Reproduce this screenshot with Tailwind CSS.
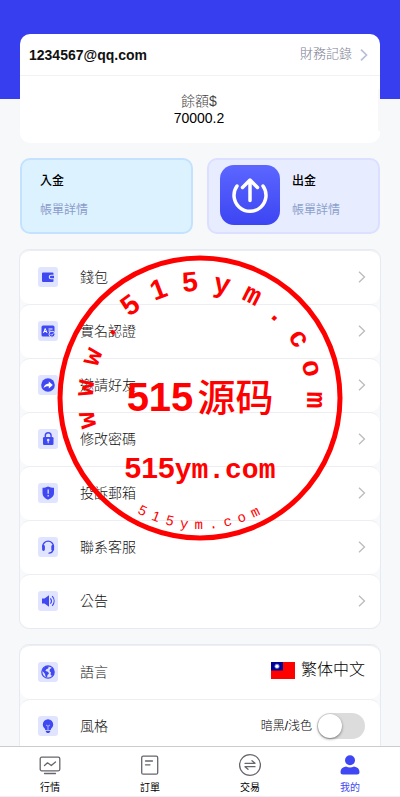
<!DOCTYPE html>
<html lang="zh-Hant">
<head>
  <meta charset="UTF-8">
  <meta name="viewport" content="width=device-width, initial-scale=1.0">
  <title>我的</title>
  <script src="https://cdn.jsdelivr.net/npm/@tailwindcss/browser@4"></script>
</head>
<body class="relative flex h-screen flex-col overflow-hidden bg-[#f6f8fa] font-['Liberation_Sans','Noto_Sans_CJK_TC',sans-serif] text-sm text-black">
  <main class="min-h-0 flex-1 overflow-y-auto [scrollbar-width:none]">
    <div class="h-[99px] bg-[#373ef0]"></div>

    <div class="-mt-[65px] px-5">
      <!-- Account -->
      <section class="rounded-[10px] bg-white">
        <div class="flex h-[42px] items-center justify-between border-b border-[#f2f2f4] pr-3 pl-[9px]">
          <h1 class="font-bold text-[#111]">1234567@qq.com</h1>
          <a href="#" class="flex items-center gap-2 text-[13px] font-light text-[#7c7e92]">
            財務記錄
            <svg class="h-3 w-2" viewBox="0 0 8 12" fill="none" stroke="#b9bfda" stroke-width="1.700"><path d="M1 .7 6.500 6 1 11.300"/></svg>
          </a>
        </div>
        <div class="pt-[13px] pb-3">
          <div class="border-r-2 border-[#f7f7f8] py-1 text-center leading-[17px]">
            <p class="font-light text-[#444]">餘額$</p>
            <p>70000.2</p>
          </div>
        </div>
      </section>

      <!-- Deposit / withdraw -->
      <section class="mt-[15px] grid grid-cols-2 gap-[14px] text-xs">
        <a href="#" class="flex h-[76px] flex-col justify-center gap-[13px] rounded-[10px] border-2 border-[#c4e2ff] bg-[#dcf3ff] pb-[2px] pl-[18px]">
          <span class="font-medium">入金</span>
          <span class="text-[#8c9bcb]">帳單詳情</span>
        </a>
        <a href="#" class="flex h-[76px] items-center gap-3 rounded-[10px] border-2 border-[#dcdfff] bg-[#e7ecff] pb-[2px] pl-[11px]">
          <svg class="h-[60px] w-[60px] shrink-0" viewBox="0 0 60 60" fill="none" stroke="#fff" stroke-width="3.500" stroke-linecap="round" stroke-linejoin="round">
            <defs>
              <linearGradient id="withdraw" x1="0" y1="0" x2="0" y2="1">
                <stop offset="0" stop-color="#5c66ff"/>
                <stop offset="1" stop-color="#3c45f2"/>
              </linearGradient>
            </defs>
            <rect width="60" height="60" rx="14" fill="url(#withdraw)" stroke="none"/>
            <path d="M17 21A16 16 0 1 0 43 21M30 35.500V15.500M22.500 22.500 30 15l7.500 7.500"/>
          </svg>
          <span class="flex flex-col gap-[13px]">
            <span class="font-medium">出金</span>
            <span class="text-[#8ba1cb]">帳單詳情</span>
          </span>
        </a>
      </section>

      <!-- Menu -->
      <nav class="-mx-px mt-[15px] rounded-[10px] border border-[#e7eaf2] bg-[#f8f9fb] font-light text-[#111]">
        <a href="#" class="flex h-[54px] items-center gap-[22px] rounded-[10px] border-t border-[#eceef2] bg-white pr-[14px] pb-px pl-[18px]">
          <svg class="h-5 w-5 rounded-[3px] bg-[#e0e4ff]" viewBox="0 0 20 20" fill="#4048f2">
            <path d="M5 5.500h9.500a1 1 0 0 1 1 1v1.200H13a2.300 2.300 0 0 0 0 4.600h2.500V14a1 1 0 0 1-1 1H5a1 1 0 0 1-1-1V6.500a1 1 0 0 1 1-1z"/>
            <path d="M13.200 8.700h2.800v2.600h-2.800a1.300 1.300 0 0 1 0-2.600z"/>
          </svg>
          <span class="flex-1">錢包</span>
          <svg class="h-3 w-2" viewBox="0 0 8 12" fill="none" stroke="#bbb" stroke-width="1.300"><path d="M1 .7 6.500 6 1 11.300"/></svg>
        </a>
        <a href="#" class="flex h-[54px] items-center gap-[22px] rounded-[10px] border-t border-[#eceef2] bg-white pr-[14px] pb-px pl-[18px]">
          <svg class="h-5 w-5 rounded-[3px] bg-[#e0e4ff]" viewBox="0 0 20 20" fill="none" stroke="#fff">
            <rect x="3.500" y="4.500" width="13" height="11" rx="1.500" fill="#4048f2" stroke="none"/>
            <path d="m5.500 12 1.700-4.500L9 12M6 10.500h2.500M10.500 8h4M10.500 10h2"/>
            <circle cx="14" cy="13.200" r="3" fill="#4048f2" stroke="#e0e4ff"/>
            <path d="m12.700 13.200 1 1 1.600-1.800" stroke-width=".8"/>
          </svg>
          <span class="flex-1">實名認證</span>
          <svg class="h-3 w-2" viewBox="0 0 8 12" fill="none" stroke="#bbb" stroke-width="1.300"><path d="M1 .7 6.500 6 1 11.300"/></svg>
        </a>
        <a href="#" class="flex h-[54px] items-center gap-[22px] rounded-[10px] border-t border-[#eceef2] bg-white pr-[14px] pb-px pl-[18px]">
          <svg class="h-5 w-5 rounded-[3px] bg-[#e0e4ff]" viewBox="0 0 20 20">
            <circle cx="10" cy="10" r="6.800" fill="#4048f2"/>
            <path d="M10.800 6.500 14.800 10l-4 3.400v-2.200c-2.400-.1-4 .5-5.200 2 .2-2.700 2-4.600 5.200-4.800z" fill="#fff"/>
          </svg>
          <span class="flex-1">邀請好友</span>
          <svg class="h-3 w-2" viewBox="0 0 8 12" fill="none" stroke="#bbb" stroke-width="1.300"><path d="M1 .7 6.500 6 1 11.300"/></svg>
        </a>
        <a href="#" class="flex h-[54px] items-center gap-[22px] rounded-[10px] border-t border-[#eceef2] bg-white pr-[14px] pb-px pl-[18px]">
          <svg class="h-5 w-5 rounded-[3px] bg-[#e0e4ff]" viewBox="0 0 20 20">
            <path d="M7.300 8.500V6.700a2.900 2.900 0 0 1 5.800 0v1.800" fill="none" stroke="#4048f2" stroke-width="1.400"/>
            <rect x="5" y="8" width="10.500" height="8" rx="1.300" fill="#4048f2"/>
            <circle cx="10.200" cy="11" r="1.300" fill="#e0e4ff"/>
            <path d="M10.200 11.500v2.700" stroke="#e0e4ff"/>
          </svg>
          <span class="flex-1">修改密碼</span>
          <svg class="h-3 w-2" viewBox="0 0 8 12" fill="none" stroke="#bbb" stroke-width="1.300"><path d="M1 .7 6.500 6 1 11.300"/></svg>
        </a>
        <a href="#" class="flex h-[54px] items-center gap-[22px] rounded-[10px] border-t border-[#eceef2] bg-white pr-[14px] pb-px pl-[18px]">
          <svg class="h-5 w-5 rounded-[3px] bg-[#e0e4ff]" viewBox="0 0 20 20">
            <path d="M10 3.500c2 1 4 1.300 6 1.300V10c0 3.200-2.500 5.200-6 6.700C6.500 15.200 4.500 13.200 4.500 10V4.800c2 0 3.700-.3 5.500-1.300z" fill="#4048f2"/>
            <path d="M10.200 6.500v4.300M10.200 12v1.400" stroke="#d0d5ff" stroke-width="1.400"/>
          </svg>
          <span class="flex-1">投訴郵箱</span>
          <svg class="h-3 w-2" viewBox="0 0 8 12" fill="none" stroke="#bbb" stroke-width="1.300"><path d="M1 .7 6.500 6 1 11.300"/></svg>
        </a>
        <a href="#" class="flex h-[54px] items-center gap-[22px] rounded-[10px] border-t border-[#eceef2] bg-white pr-[14px] pb-px pl-[18px]">
          <svg class="h-5 w-5 rounded-[3px] bg-[#e0e4ff]" viewBox="0 0 20 20" fill="none" stroke="#4048f2" stroke-linecap="round">
            <path d="M4.700 9.500a5.400 5.400 0 0 1 10.800 0" stroke-width="1.400"/>
            <path d="M5.500 9.500v3M14.700 9.500v3" stroke-width="2.800"/>
            <path d="M14.800 13.500c-.4 1.600-1.800 2.500-3.800 2.600" stroke-width="1.300"/>
          </svg>
          <span class="flex-1">聯系客服</span>
          <svg class="h-3 w-2" viewBox="0 0 8 12" fill="none" stroke="#bbb" stroke-width="1.300"><path d="M1 .7 6.500 6 1 11.300"/></svg>
        </a>
        <a href="#" class="flex h-[54px] items-center gap-[22px] rounded-[10px] border-t border-[#eceef2] bg-white pr-[14px] pb-px pl-[18px]">
          <svg class="h-5 w-5 rounded-[3px] bg-[#e0e4ff]" viewBox="0 0 20 20">
            <path d="M4 7.500h2.500L11 4.300v11.400l-4.500-3.200H4z" fill="#4048f2"/>
            <path d="M12.300 7.300c1.400 1.600 1.400 3.800 0 5.400M14.200 5.200c2.500 2.800 2.500 6.800 0 9.600" fill="none" stroke="#4048f2" stroke-width="1.200"/>
          </svg>
          <span class="flex-1">公告</span>
          <svg class="h-3 w-2" viewBox="0 0 8 12" fill="none" stroke="#bbb" stroke-width="1.300"><path d="M1 .7 6.500 6 1 11.300"/></svg>
        </a>
      </nav>

      <!-- Settings -->
      <section class="-mx-px mt-[15px] mb-4 rounded-[10px] border border-[#e7eaf2] bg-[#f8f9fb] font-light text-[#111]">
        <div class="flex h-[54px] items-center gap-[22px] rounded-[10px] border-t border-[#eceef2] bg-white pr-[15px] pb-px pl-[18px]">
          <svg class="h-5 w-5 rounded-[3px] bg-[#e0e4ff]" viewBox="0 0 20 20">
            <circle cx="10" cy="10" r="6.200" fill="none" stroke="#4048f2" stroke-width="1.200"/>
            <path d="M5 6.500 8.500 4l2.500.5-1 2-2 1-.5 1.500 2.500.8 1 1.700-1.500 1.500-.5 2.500-1.500-1-.5-2.500L5.500 10 4 9zM12 7l2.500-1.500L16 8.500v3L14 14l-1.500-1.500.5-2-1.500-1.500z" fill="#4048f2"/>
          </svg>
          <span class="flex-1">語言</span>
          <button type="button" class="flex items-center gap-[6px] pb-1 text-base leading-5 text-black">
            <svg class="h-[17px] w-6" viewBox="0 0 24 17">
              <path d="M0 0h24v17H0z" fill="#fe0000"/>
              <path d="M0 0h12v8.500H0z" fill="#000095"/>
              <circle cx="6" cy="4.300" r="2.500" fill="#7f86d8"/>
              <circle cx="6" cy="4.300" r="1.600" fill="#fff"/>
            </svg>
            繁体中文
          </button>
        </div>
        <div class="flex h-[54px] items-center gap-[22px] rounded-[10px] border-t border-[#eceef2] bg-white pr-[15px] pb-px pl-[18px]">
          <svg class="h-5 w-5 rounded-[3px] bg-[#e0e4ff]" viewBox="0 0 20 20">
            <path d="M10 3.200a5.200 5.200 0 0 1 5.200 5.200c0 2-1.100 3-1.900 4.100-.4.500-.5 1-.5 1.500H7.200c0-.5-.1-1-.5-1.500-.8-1.100-1.900-2.100-1.900-4.100A5.200 5.200 0 0 1 10 3.200zM7.800 14.800h4.400v1L11 17H9l-1.200-1.200z" fill="#4048f2"/>
            <path d="m8 9 2 1.200L12 9M10 10.200V14" fill="none" stroke="#b9c0ff" stroke-width=".9"/>
          </svg>
          <span class="flex-1">風格</span>
          <label class="flex items-center gap-[5px] text-xs text-black">
            暗黑/浅色
            <input type="checkbox" class="peer sr-only">
            <span class="flex h-[26px] w-12 rounded-full bg-[#dcdcdc] p-px peer-checked:justify-end peer-checked:bg-[#373ef0]">
              <span class="h-6 w-6 rounded-full bg-white shadow-sm shadow-black/40"></span>
            </span>
          </label>
        </div>
      </section>
    </div>
  </main>

  <!-- Tab bar -->
  <nav class="grid h-[51px] shrink-0 grid-cols-4 border-t border-b border-t-[#ccc] border-b-[#f0f0f4] bg-white text-[10px] leading-4">
    <a href="#" class="flex flex-col items-center gap-[3px] pt-[6px]">
      <svg class="h-6 w-6" viewBox="0 0 24 24" fill="none" stroke="#66666c" stroke-width="1.300" stroke-linecap="round" stroke-linejoin="round">
        <rect x="2.200" y="4.200" width="19.600" height="13.600" rx="1.500"/>
        <path d="m6.500 12.500 3-2.700 3.800 2.700 4.200-3.500M6.500 20.500h11"/>
      </svg>
      行情
    </a>
    <a href="#" class="flex flex-col items-center gap-[3px] pt-[6px]">
      <svg class="h-6 w-6" viewBox="0 0 24 24" fill="none" stroke="#66666c" stroke-width="1.300" stroke-linecap="round">
        <rect x="3.700" y="3.200" width="16" height="18" rx="1.500"/>
        <path d="M7.500 8h7M7.500 11.800h4.500"/>
      </svg>
      訂單
    </a>
    <a href="#" class="flex flex-col items-center gap-[3px] pt-[6px]">
      <svg class="h-6 w-6" viewBox="0 0 24 24" fill="none" stroke="#66666c" stroke-width="1.300" stroke-linecap="round" stroke-linejoin="round">
        <circle cx="12" cy="12" r="10.400"/>
        <path d="M7 10.300h10l-3-2.600M17 13.700H7l3 2.600"/>
      </svg>
      交易
    </a>
    <a href="#" aria-current="page" class="flex flex-col items-center gap-[3px] pt-[6px] text-[#3f47f4]">
      <svg class="h-6 w-6" viewBox="0 0 24 24" fill="#3f47f4">
        <circle cx="12" cy="7.300" r="5"/>
        <path d="M8 13.500c2.500 1.200 5.500 1.200 8 0 3.500.6 5.500 2.500 5.500 5.500 0 1.700-.8 2.500-2.500 2.500H5c-1.700 0-2.500-.8-2.500-2.500 0-3 2-4.900 5.500-5.500z"/>
      </svg>
      我的
    </a>
  </nav>

  <!-- Stamp -->
  <svg id="stamp" class="pointer-events-none absolute top-[255px] left-1/2 h-[286px] w-[286px] -translate-x-1/2 font-['Liberation_Mono',monospace]" viewBox="-143 -143 286 286" fill="#f00" text-anchor="middle">
    <circle r="140" fill="none" stroke="#f00" stroke-width="5"/>
    <text y="13" class="font-['Liberation_Sans','Noto_Sans_CJK_SC',sans-serif] text-[40px]"><tspan class="font-bold">515</tspan><tspan dx="4" class="text-[38px] font-medium">源码</tspan></text>
    <text y="80" class="text-[28px] font-bold"><tspan class="font-['Liberation_Sans',sans-serif] text-[30px]">515</tspan>ym.com</text>
  </svg>

  <script>
    const stamp = document.getElementById("stamp");

    // Spread the characters of a text evenly around the ring
    function arcText(text, start, step, baseline, digitClass, letterClass) {
      [...text].forEach((char, i) => {
        const el = document.createElementNS("http://www.w3.org/2000/svg", "text");
        el.setAttribute("class", /\d/.test(char) ? digitClass : letterClass);
        el.setAttribute("y", baseline);
        el.setAttribute("transform", `rotate(${start + i * step})`);
        el.textContent = char;
        stamp.appendChild(el);
      });
    }

    arcText("www.515ym.com", -101, 16, -107, "font-['Liberation_Sans',sans-serif] text-[28px] font-bold", "text-[28px] font-bold");
    arcText("515ym.com", 27, -6.6, 131, "font-['Liberation_Sans',sans-serif] text-sm", "text-sm");
  </script>
</body>
</html>
